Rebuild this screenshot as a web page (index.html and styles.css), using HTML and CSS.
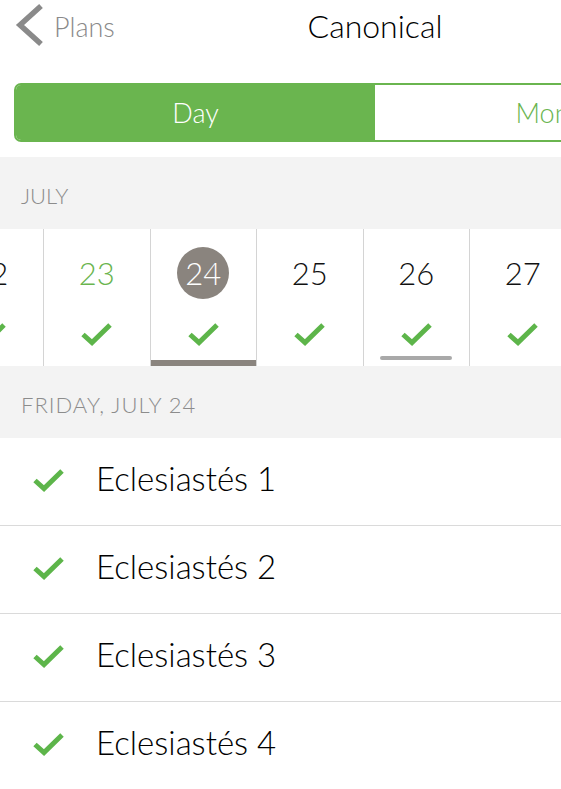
FILE: index.html
```html
<!DOCTYPE html>
<html lang="es">
<head>
<meta charset="utf-8">
<title>Canonical</title>
<link rel="stylesheet" href="styles.css">
</head>
<body>
<div class="screen">
  <header class="nav">
    <a class="back" href="#">
      <svg class="chev" width="30" height="44" viewBox="0 0 30 44"><path d="M27 3 L6 22 L27 41" fill="none" stroke="#8a8a8a" stroke-width="5.5"/></svg>
      <span class="back-text">Plans</span>
    </a>
    <h1 class="title">Canonical</h1>
    <span class="nav-spacer"></span>
  </header>

  <div class="segmented">
    <div class="seg seg-on">Day</div>
    <div class="seg">Month</div>
  </div>

  <div class="section-label">JULY</div>

  <div class="strip">
    <div class="day">
      <div class="num">22</div>
      <svg class="check" width="31" height="24" viewBox="0 0 31 24"><path d="M2 12.5 L11 20.5 L29 3" fill="none" stroke="#5db54a" stroke-width="5"/></svg>
    </div>
    <div class="day">
      <div class="num past">23</div>
      <svg class="check" width="31" height="24" viewBox="0 0 31 24"><path d="M2 12.5 L11 20.5 L29 3" fill="none" stroke="#5db54a" stroke-width="5"/></svg>
    </div>
    <div class="day">
      <div class="num sel">24</div>
      <svg class="check" width="31" height="24" viewBox="0 0 31 24"><path d="M2 12.5 L11 20.5 L29 3" fill="none" stroke="#5db54a" stroke-width="5"/></svg>
      <div class="bar-selected"></div>
    </div>
    <div class="day">
      <div class="num">25</div>
      <svg class="check" width="31" height="24" viewBox="0 0 31 24"><path d="M2 12.5 L11 20.5 L29 3" fill="none" stroke="#5db54a" stroke-width="5"/></svg>
    </div>
    <div class="day">
      <div class="num">26</div>
      <svg class="check" width="31" height="24" viewBox="0 0 31 24"><path d="M2 12.5 L11 20.5 L29 3" fill="none" stroke="#5db54a" stroke-width="5"/></svg>
      <div class="bar-today"></div>
    </div>
    <div class="day">
      <div class="num">27</div>
      <svg class="check" width="31" height="24" viewBox="0 0 31 24"><path d="M2 12.5 L11 20.5 L29 3" fill="none" stroke="#5db54a" stroke-width="5"/></svg>
    </div>
    <div class="day">
      <div class="num">28</div>
      <svg class="check" width="31" height="24" viewBox="0 0 31 24"><path d="M2 12.5 L11 20.5 L29 3" fill="none" stroke="#5db54a" stroke-width="5"/></svg>
    </div>
  </div>

  <div class="section-label wide">FRIDAY, JULY 24</div>

  <ul class="list">
    <li class="row">
      <svg class="check" width="31" height="24" viewBox="0 0 31 24"><path d="M2 12.5 L11 20.5 L29 3" fill="none" stroke="#5db54a" stroke-width="5"/></svg>
      <span class="row-text">Eclesiastés 1</span>
    </li>
    <li class="row">
      <svg class="check" width="31" height="24" viewBox="0 0 31 24"><path d="M2 12.5 L11 20.5 L29 3" fill="none" stroke="#5db54a" stroke-width="5"/></svg>
      <span class="row-text">Eclesiastés 2</span>
    </li>
    <li class="row">
      <svg class="check" width="31" height="24" viewBox="0 0 31 24"><path d="M2 12.5 L11 20.5 L29 3" fill="none" stroke="#5db54a" stroke-width="5"/></svg>
      <span class="row-text">Eclesiastés 3</span>
    </li>
    <li class="row">
      <svg class="check" width="31" height="24" viewBox="0 0 31 24"><path d="M2 12.5 L11 20.5 L29 3" fill="none" stroke="#5db54a" stroke-width="5"/></svg>
      <span class="row-text">Eclesiastés 4</span>
    </li>
  </ul>
</div>
</body>
</html>
```

FILE: styles.css
```css
html, body {
  margin: 0;
  padding: 0;
  overflow: hidden;
  background: #ffffff;
}
body {
  font-family: Lato, "Noto Sans", sans-serif;
  font-weight: 300;
  color: #111111;
}
.screen {
  width: 750px;
}
.nav {
  height: 50px;
  display: grid;
  grid-template-columns: 1fr auto 1fr;
  align-items: center;
}
.back {
  display: flex;
  align-items: center;
  text-decoration: none;
  padding-left: 14px;
}
.chev {
  display: block;
}
.back-text {
  font-size: 27px;
  color: #8a8a8a;
  margin-left: 10px;
  padding-top: 2px;
}
.title {
  margin: 0;
  font-size: 32px;
  font-weight: 300;
  color: #000000;
}
.segmented {
  margin: 33px 14px 15px;
  height: 59px;
  box-sizing: border-box;
  border: 2px solid #6ab54f;
  border-radius: 7px;
  overflow: hidden;
  display: flex;
}
.seg {
  flex: 1;
  display: flex;
  align-items: center;
  justify-content: center;
  font-size: 27px;
  color: #6ab54f;
  background: #ffffff;
}
.seg-on {
  background: #6ab54f;
  color: #ffffff;
}
.section-label {
  height: 72px;
  box-sizing: border-box;
  background: #f3f3f3;
  padding: 27px 0 0 21px;
  font-size: 22px;
  color: #8c8c8c;
  line-height: 24px;
}
.section-label.wide {
  letter-spacing: 1px;
}
.strip {
  display: flex;
  height: 137px;
  margin-left: -62.5px;
  background: #ffffff;
}
.day {
  width: 106.5px;
  flex: none;
  box-sizing: border-box;
  border-right: 1px solid #d4d4d4;
  display: flex;
  flex-direction: column;
  align-items: center;
  padding-top: 18px;
}
.num {
  width: 52px;
  height: 52px;
  display: flex;
  align-items: center;
  justify-content: center;
  font-size: 31px;
  color: #111111;
  padding-bottom: 1px;
  box-sizing: border-box;
}
.num.past {
  color: #6ab54f;
}
.num.sel {
  background: #8a847e;
  color: #ffffff;
  border-radius: 50%;
}
.day .check {
  margin-top: 23px;
  display: block;
}
.bar-selected {
  margin-top: auto;
  align-self: stretch;
  height: 6px;
  background: #8a847e;
}
.bar-today {
  margin-top: auto;
  margin-bottom: 6px;
  width: 72px;
  height: 4px;
  border-radius: 2px;
  background: #a9a9a9;
}
.list {
  list-style: none;
  margin: 0;
  padding: 0;
}
.row {
  height: 88px;
  box-sizing: border-box;
  border-bottom: 1px solid #dadada;
  display: flex;
  align-items: center;
  padding-left: 33px;
}
.row .check {
  display: block;
  flex: none;
  margin-bottom: 3px;
}
.row-text {
  margin-left: 32px;
  font-size: 33px;
  color: #000000;
  margin-bottom: 7px;
}
```
